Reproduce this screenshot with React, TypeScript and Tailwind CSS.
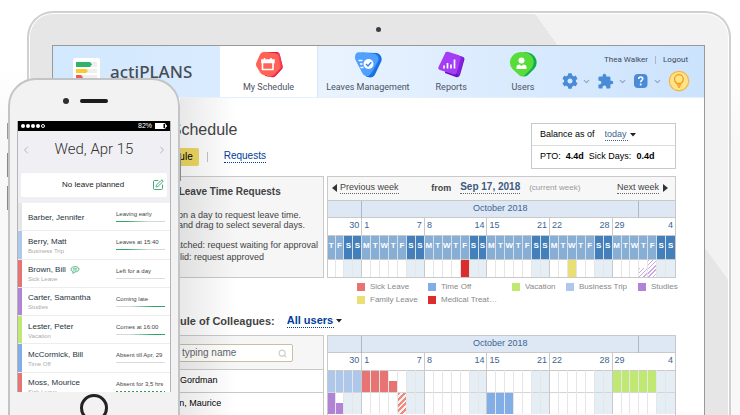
import React from "react";
import clsx from "clsx";
import { FaCog } from "react-icons/fa";
import { MdExtension } from "react-icons/md";
import { ChevronDown, ChevronLeft, ChevronRight, Search, SquarePen } from "lucide-react";

type Mark = { color: string; half?: boolean };

const colors = {
  sick: "bg-[#e87373]",
  timeOff: "bg-[#82aee8]",
  vacation: "bg-[#bfe973]",
  business: "bg-[#adc8ea]",
  studies: "bg-[#b083d6]",
  family: "bg-[#e9df74]",
  medical: "bg-[#dc2d2d]",
  none: "bg-[#e6e6e6]",
  studiesWait:
    "bg-[repeating-linear-gradient(135deg,#c9abe6_0px,#c9abe6_1px,#ffffff_1px,#ffffff_3px)]",
  sickWait:
    "bg-[repeating-linear-gradient(135deg,#ee8a80_0px,#ee8a80_2px,#fdf3ee_2px,#fdf3ee_4px)]",
};

// the calendar runs from Thu, Sep 27 to Sun, Nov 4
const DAYS = 39;
const OFFSET = 4;
const letters = ["T", "F", "S", "S", "M", "T", "W"];
const days = Array.from({ length: DAYS }, (_, i) => i);
const weeks = [
  [1, 7],
  [8, 14],
  [15, 21],
  [22, 28],
  [29, 4],
];

const isWeekend = (i: number) => i % 7 === 2 || i % 7 === 3;
const isWeekEnd = (i: number) => i % 7 === 3;

const oct = (day: number) => day + OFFSET - 1;

const myMarks: Record<number, Mark> = {
  [oct(12)]: { color: colors.medical },
  [oct(24)]: { color: colors.family },
  [oct(32)]: { color: colors.studiesWait, half: true },
  [oct(33)]: { color: colors.studiesWait },
};

const gordman: Record<number, Mark> = {
  0: { color: colors.business },
  1: { color: colors.business },
  2: { color: colors.business },
  3: { color: colors.business },
  [oct(1)]: { color: colors.sick },
  [oct(2)]: { color: colors.sick },
  [oct(3)]: { color: colors.sick },
  [oct(4)]: { color: colors.sick, half: true },
  [oct(29)]: { color: colors.vacation },
  [oct(30)]: { color: colors.vacation },
  [oct(31)]: { color: colors.vacation },
  [oct(32)]: { color: colors.vacation },
  [oct(33)]: { color: colors.vacation },
};

const maurice: Record<number, Mark> = {
  0: { color: colors.studies },
  1: { color: colors.studies, half: true },
  [oct(5)]: { color: colors.sickWait },
  [oct(15)]: { color: colors.timeOff },
  [oct(16)]: { color: colors.timeOff },
  [oct(17)]: { color: colors.timeOff },
};

const legend = [
  { label: "Sick Leave", color: colors.sick },
  { label: "Time Off", color: colors.timeOff },
  { label: "Vacation", color: colors.vacation },
  { label: "Business Trip", color: colors.business },
  { label: "Studies", color: colors.studies },
  { label: "Family Leave", color: colors.family },
  { label: "Medical Treat…", color: colors.medical },
];

const early = "bg-[linear-gradient(90deg,#2fa566_20%,#d2dbd6_65%)]";
const late = "bg-[linear-gradient(90deg,#d2dbd6_30%,#2fa566_75%)]";
const empty = "bg-[#dcdcdc]";
const dashes =
  "bg-[repeating-linear-gradient(90deg,#2f9a60_0px,#2f9a60_2px,#ffffff_2px,#ffffff_4px)]";

const people = [
  { name: "Barber, Jennifer", color: colors.none, status: "Leaving early", bar: early },
  { name: "Berry, Matt", type: "Business Trip", color: colors.business, status: "Leaves at 15:40", bar: early },
  { name: "Brown, Bill", type: "Sick Leave", color: colors.sick, status: "Left for a day", bar: empty, note: true },
  { name: "Carter, Samantha", type: "Studies", color: colors.studies, status: "Coming late", bar: late },
  { name: "Lester, Peter", type: "Vacation", color: colors.vacation, status: "Comes at 16:00", bar: late },
  { name: "McCormick, Bill", type: "Time Off", color: colors.timeOff, status: "Absent till Apr, 29", bar: empty },
  { name: "Moss, Mourice", type: "Sick Leave", color: colors.sick, status: "Absent for 3,5 hrs", bar: dashes },
];

const LogoIcon = () => (
  <svg viewBox="0 0 27 27" className="size-[27px]">
    <rect width="27" height="27" rx="2" fill="#fff" />
    <path d="M3 4h21v5H3zM3 11h21v4H3zM3 17h21v5H3z" fill="#efefef" />
    <path d="M3 4h14l2 2.3L17 9H3z" fill="#2fb36c" />
    <path d="M3 11h10l2 2-2 2H3z" fill="#fcca2c" />
    <path d="M3 17h5l2 2.500-2 2.500H3z" fill="#ee5a5a" />
  </svg>
);

const ScheduleIcon = () => (
  <svg viewBox="0 0 28 28" className="size-7">
    <path d="M9 1h13q2 0 2.700 2l3 12q.5 2-1 3.500l-6 6.500q-1.500 1.500-3.500 1.200L10 25z" fill="#e8163f" />
    <path d="M22 2q2.500 0 3 2.500l2 10q.4 2-1 3.200L18 26z" fill="#f53f55" />
    <path d="M7.500 1.200Q9 .5 11 1l9.500 1.200q2 .3 2.800 2.300l2 10q.4 2-1 3.500l-6 6.300q-1.500 1.500-3.500 1.200L8.500 24q-2-.4-3-2L1.500 15.500q-1-1.600-.3-3.500L5 3.500q.8-1.700 2.500-2.300z" fill="#ff6257" />
    <path d="M7.500 10v8.500h10.500V10z" fill="none" stroke="#fff" strokeWidth="1.600" />
    <path d="M7 9h12v2.500H7zM9.500 7v3M16 7v3" fill="#fff" stroke="#fff" strokeWidth="1.500" />
  </svg>
);

const LeavesIcon = () => (
  <svg viewBox="0 0 28 28" className="size-7">
    <path d="M7 1.500 23 2q2.500.5 3.800 3 1.500 3 .4 5.500L21 23.500q-1.500 3-5 3l-4-1z" fill="#1a6fe0" />
    <path d="M21 3q4 1 4.500 5L17 25z" fill="#2e86f2" />
    <path d="M5 1.300 19.500 2.500q3 .5 4 3t.2 4.500L16.500 23q-1.500 2.500-4.300 2.200-2.300-.4-3.700-2.700L1.300 8.500Q.4 6 1.500 3.500T5 1.300z" fill="#4fa0ff" />
    <path d="M4.500 9.500h4M6 13h2.500M6.500 16.500h3" stroke="#fff" strokeWidth="1.600" />
    <circle cx="14.500" cy="13" r="5" fill="#fff" />
    <path d="m12 13 2 2 3.300-3.800" fill="none" stroke="#2e86f2" strokeWidth="1.400" />
  </svg>
);

const ReportsIcon = () => (
  <svg viewBox="0 0 28 28" className="size-7">
    <path d="M9 1 26 6q1.800.8 1.400 2.600L23 24q-1 2.500-3.500 2.300L8 22z" fill="#6a0fc0" />
    <path d="m23 5 3 1.300q1 .6.800 2L22.500 23q-.6 2-2.500 2z" fill="#8422dc" />
    <path d="M8.500 1.500Q9.300.4 11 .8l11 3.400q2.200.8 1.700 3L20 21.500q-.8 2.500-3 2L3 19q-2.400-1-1.500-3z" fill="#a43df5" />
    <path d="M7 17.500v-3M10.500 17.500V12M14 17.500v-4M17.500 17.500V8.500" stroke="#fff" strokeWidth="1.700" />
  </svg>
);

const UsersIcon = () => (
  <svg viewBox="0 0 28 28" className="size-7">
    <path d="M15 1q9 0 12 7 2 6-2 10l-6 6q-2 2-5 1.500z" fill="#0fae4d" />
    <path d="M12.500 1Q21 .8 24 7.500q2 5.500-1.500 10l-7 7q-2.500 2-5 0L3.500 18Q-.3 13.500 1.500 8 4.500 1.200 12.500 1z" fill="#58dc3a" />
    <circle cx="12.500" cy="9.500" r="3" fill="#fff" />
    <path d="M7.500 18v-2q0-2.500 3-2.500l2 1.500 2-1.500q3 0 3 2.500v2z" fill="#fff" />
  </svg>
);

const HelpIcon = () => (
  <svg viewBox="0 0 16 16" className="size-4">
    <rect x="1" y="1" width="13.500" height="14" rx="4" fill="#4a8bd8" />
    <path d="M5.700 6q0-2 2-2t2 1.800q0 1-1 1.600-1 .5-1 1.800" fill="none" stroke="#fff" strokeWidth="1.600" />
    <circle cx="7.700" cy="11.600" r="1" fill="#fff" />
  </svg>
);

const BulbIcon = () => (
  <svg viewBox="0 0 22 22" className="size-[22px]">
    <circle cx="11" cy="11" r="9.700" fill="#ffe48a" stroke="#f6b545" strokeWidth="1.200" />
    <path d="M8.800 13.500Q6.500 11.500 6.500 9a4.400 4.400 0 0 1 8.800 0q0 2.500-2.300 4.500zM8.800 15.200h4.300M9.800 17h2.300" fill="none" stroke="#f59a1b" strokeWidth="1.300" />
  </svg>
);

const Note = () => (
  <svg viewBox="0 0 10 8" className="h-2 w-[10px]">
    <path d="M5 .6c2.300 0 4 1 4 2.600S7.300 5.900 5 5.900L2.800 7.400l.3-1.700C1.800 5.300 1 4.400 1 3.200 1 1.600 2.700.6 5 .6z" fill="#e4f5ec" stroke="#43ac75" strokeWidth=".8" />
    <path d="M3 2.600h4M3 4h4" stroke="#43ac75" strokeWidth=".6" />
  </svg>
);

const Caret = () => (
  <svg viewBox="0 0 6 4" className="h-1 w-1.5" aria-hidden="true">
    <path d="M0 0h6L3 3.500z" fill="#222" />
  </svg>
);

const navItems = [
  { label: "My Schedule", icon: <ScheduleIcon />, style: "bg-white px-[23px]" },
  { label: "Leaves Management", icon: <LeavesIcon />, style: "border-l border-[#d5e6f8] px-2" },
  { label: "Reports", icon: <ReportsIcon />, style: "px-[18px]" },
  { label: "Users", icon: <UsersIcon />, style: "pl-6 pr-2" },
];

const Header = () => {
  return (
    <header className="flex h-[52px] justify-between border-b border-[#e6f0fa] bg-[linear-gradient(90deg,#d2e8fe_0%,#d9ebfe_25%,#e9f3fe_42%,#dcecfe_65%,#cce3fd_100%)]">
      <div className="flex shrink-0">
        <a href="#home" className="flex w-[167px] shrink-0 items-center gap-[10px] pl-5">
          <LogoIcon />
          <span className="font-['Noto_Sans'] text-[17px] font-medium text-[#474c55]">actiPLANS</span>
        </a>
        <nav className="flex">
          {navItems.map((item) => (
            <a
              key={item.label}
              href="#nav"
              className={clsx("flex flex-col items-center pt-[5px] font-[Roboto] text-[9px] leading-4 text-[#4b5261]", item.style)}
            >
              {item.icon}
              <span className="whitespace-nowrap">{item.label}</span>
            </a>
          ))}
        </nav>
      </div>
      <div className="flex shrink-0 flex-col items-end pr-[14px] pt-2">
        <div className="flex h-3 items-center gap-[7px] pr-0.5 font-[Roboto] text-[8px] text-[#3f4a5c]">
          <span>Thea Walker</span>
          <span className="h-2 w-px bg-[#a9b6c4]" />
          <a href="#logout">Logout</a>
        </div>
        <div className="flex items-center gap-1.5 pt-1 text-[#4a8bd8]">
          <button aria-label="Settings" className="flex items-center gap-1">
            <FaCog size={16} />
            <ChevronDown size={9} color="#8fa5bd" strokeWidth={3} />
          </button>
          <button aria-label="Add-ons" className="flex items-center gap-1">
            <MdExtension size={17} />
            <ChevronDown size={9} color="#8fa5bd" strokeWidth={3} />
          </button>
          <button aria-label="Help" className="flex items-center gap-1">
            <HelpIcon />
            <ChevronDown size={9} color="#8fa5bd" strokeWidth={3} />
          </button>
          <button aria-label="Tips">
            <BulbIcon />
          </button>
        </div>
      </div>
    </header>
  );
};

// the first day is cut by the left edge of the calendar
const DayColumns = () => (
  <colgroup>
    {days.map((i) => (
      <col key={i} className={i === 0 ? "w-[7px]" : undefined} />
    ))}
  </colgroup>
);

const MonthRows = () => (
  <>
    <tr className="h-4 border-b border-[#c9c9c9] bg-[#dde8f4]">
      <th colSpan={4} className="border-r border-[#a9b9c9]" />
      <th colSpan={31} className="border-r border-[#a9b9c9] p-0 pb-0.5 font-normal">
        October 2018
      </th>
      <th colSpan={4} />
    </tr>
    <tr className="h-[18px] border-b border-[#c9c9c9]">
      <th colSpan={4} className="border-r border-[#c9c9c9] pb-0.5 pr-0.5 text-right font-normal">
        30
      </th>
      {weeks.map(([from, to]) => (
        <th key={from} colSpan={7} className="border-r border-[#c9c9c9] px-0.5 pb-0.5 font-normal last:border-r-0">
          <div className="flex justify-between">
            <span>{from}</span>
            <span>{to}</span>
          </div>
        </th>
      ))}
    </tr>
  </>
);

const DayCells = ({ marks }: { marks: Record<number, Mark> }) => (
  <>
    {days.map((i) => (
      <td
        key={i}
        className={clsx(
          "h-px border-r p-0 last:border-r-0",
          isWeekEnd(i) ? "border-[#c9c9c9]" : "border-[#e6e6e6]",
          isWeekend(i) && "bg-[#e6eef5]"
        )}
      >
        {marks[i] && (
          <div className="flex h-full flex-col justify-end">
            <div className={clsx(marks[i].color, marks[i].half ? "h-1/2" : "h-full")} />
          </div>
        )}
      </td>
    ))}
  </>
);

const table = "w-full table-fixed border-collapse text-[9px] leading-3 text-[#3c6492]";

const MySchedule = () => {
  return (
    <section className="flex-1 border border-[#c9c9c9]">
      <div className="flex h-6 items-center justify-between border-b border-[#c9c9c9] bg-[#f7f7f7] pb-0.5 pl-1 pr-[7px] text-[9px] leading-3 text-[#444]">
        <button className="flex items-center gap-[3px]">
          <svg viewBox="0 0 5 8" className="h-2 w-[5px]">
            <path d="M5 0v8L0 4z" fill="#333" />
          </svg>
          <span className="border-b border-dotted border-[#666]">Previous week</span>
        </button>
        <div className="flex items-center gap-[9px] pr-1">
          <span className="font-bold">from</span>
          <button className="border-b border-dotted border-[#666] text-[10px] font-bold text-[#3c5a80]">
            Sep 17, 2018
          </button>
          <span className="text-[8px] text-[#999]">(current week)</span>
        </div>
        <button className="flex items-center gap-1">
          <span className="border-b border-dotted border-[#666]">Next week</span>
          <svg viewBox="0 0 5 8" className="h-2 w-[5px]">
            <path d="M0 0v8l5-4z" fill="#333" />
          </svg>
        </button>
      </div>
      <table className={table}>
        <DayColumns />
        <thead>
          <MonthRows />
          <tr className="h-6 border-b border-[#c9c9c9]">
            {days.map((i) => (
              <th
                key={i}
                className={clsx(
                  "border-r border-[#d5e0ea] p-0 pb-[3px] text-[8px] text-white last:border-r-0",
                  isWeekend(i) ? "bg-[#437fba]" : "bg-[#87aed5]"
                )}
              >
                {letters[i % 7]}
              </th>
            ))}
          </tr>
        </thead>
        <tbody>
          <tr className="h-[18px]">
            <DayCells marks={myMarks} />
          </tr>
        </tbody>
      </table>
    </section>
  );
};

const Content = () => {
  return (
    <main className="pl-[92px] pr-7">
      <div className="flex h-[78px] justify-between">
        <div className="pt-5">
          <h1 className="text-base leading-6 text-[#444]">My Schedule</h1>
          <div className="flex h-6 items-end text-[10px]">
            <button className="rounded-xs bg-[#f0d962] px-1.5 py-[3px] leading-3 text-black">Schedule</button>
            <span className="ml-2 mb-1 h-[10px] w-px bg-[#c4c4c4]" />
            <a href="#requests" className="ml-4 mb-[3px] border-b border-dotted border-[#003d99] leading-3 text-[#003d99]">
              Requests
            </a>
          </div>
        </div>
        <div className="mt-[25px] h-[46px] w-[145px] border border-[#c9c9c9] bg-white text-[9px] text-black">
          <div className="flex h-[22px] items-center border-b border-[#dcdcdc] px-2">
            <label htmlFor="balance">Balance as of</label>
            <select
              id="balance"
              className="ml-[10px] mr-0.5 appearance-none border-b border-dotted border-[#3c6492] leading-[11px] text-[#3c6492]"
            >
              <option>today</option>
            </select>
            <Caret />
          </div>
          <div className="flex h-[22px] items-center px-2 whitespace-nowrap">
            PTO: <b className="mx-[5px]">4.4d</b> Sick Days: <b className="ml-[5px]">0.4d</b>
          </div>
        </div>
      </div>

      <div className="flex gap-[3px]">
        <section className="w-[179px] border border-[#c9c9c9] bg-[#f6f6f6] pl-[10px] pt-[9px] text-[9px] leading-[10px] whitespace-nowrap text-[#444]">
          <h2 className="pl-1.5 text-[10px] leading-3 font-bold">My Leave Time Requests</h2>
          <p className="pt-3">Click on a day to request leave time.</p>
          <p>Click and drag to select several days.</p>
          <p className="flex items-center gap-[5px] pt-[10px]">
            <span className={clsx("size-2", colors.sickWait)} />
            Hatched: request waiting for approval
          </p>
          <p className="flex items-center gap-[5px] pt-0.5">
            <span className={clsx("size-2", colors.sick)} />
            Solid: request approved
          </p>
        </section>
        <MySchedule />
      </div>

      <ul className="ml-[212px] grid grid-cols-[71px_84px_54px_72px_auto] pt-0.5 text-[8px] leading-[13px] text-[#888]">
        {legend.map((item) => (
          <li key={item.label} className="flex items-center gap-[5px] whitespace-nowrap">
            <span className={clsx("size-2", item.color)} />
            {item.label}
          </li>
        ))}
      </ul>

      <div className="flex items-center pb-1.5 pl-0.5 pt-[7px] text-[11px] leading-4 font-bold text-[#444]">
        <label htmlFor="users">Schedule of Colleagues:</label>
        <select
          id="users"
          className="ml-3 mr-0.5 appearance-none border-b border-dotted border-[#003d99] leading-[13px] text-[#003d99]"
        >
          <option>All users</option>
        </select>
        <Caret />
      </div>

      <div className="flex gap-[3px]">
        <div className="w-[179px] border border-[#c9c9c9] text-[9px] text-black">
          <div className="h-[34px] border-b border-[#c9c9c9] bg-[#f6f6f6] pl-1.5 pr-[30px] pt-2">
            <div className="flex h-[18px] items-center rounded-xs border border-[#cbbf9c] bg-white px-[5px]">
              <input
                aria-label="Find a user"
                placeholder="Start typing name"
                className="w-full min-w-0 text-[10px] leading-3 outline-none placeholder:text-[#666]"
              />
              <Search size={9} strokeWidth={3} className="shrink-0 text-[#cfcfcf]" />
            </div>
          </div>
          <div className="flex h-[23px] items-center border-b border-[#c9c9c9] pl-2">Adam Gordman</div>
          <div className="flex h-[22px] items-center pl-2">Watson, Maurice</div>
        </div>
        <div className="flex-1 border border-[#c9c9c9]">
          <table className={table}>
            <DayColumns />
            <thead>
              <MonthRows />
            </thead>
            <tbody>
              <tr className="h-[22px] border-b border-[#d5d5d5]">
                <DayCells marks={gordman} />
              </tr>
              <tr className="h-[22px]">
                <DayCells marks={maurice} />
              </tr>
            </tbody>
          </table>
        </div>
      </div>
    </main>
  );
};

const Phone = () => {
  return (
    <aside className="absolute left-2 top-[78px] h-[360px] w-[172px] rounded-t-[28px] border-2 border-[#c3c4c6] bg-[#f2f2f2] px-[7px]">
      <span className="absolute -left-[3px] top-[43px] h-4 w-px bg-[#999]" />
      <span className="absolute -left-[3px] top-[73px] h-6 w-px bg-[#888]" />
      <span className="absolute -left-[3px] top-[106px] h-6 w-px bg-[#888]" />
      <span className="absolute -right-[3px] top-[73px] h-7 w-px bg-[#888]" />
      <div className="flex h-[41px] items-center gap-[11px] pl-[46px]">
        <span className="size-1.5 rounded-full bg-[#2e2e2e]" />
        <span className="h-1 w-7 rounded-full bg-[#1c1c1c]" />
      </div>
      <div className="border-x border-[#b5b5b8] bg-[#f0eff4]">
        <div className="flex h-[10px] items-center bg-black px-[3px] text-[7px] text-white">
          <span className="flex gap-px">
            <i className="size-1 rounded-full bg-white" />
            <i className="size-1 rounded-full bg-white" />
            <i className="size-1 rounded-full bg-white" />
            <i className="size-1 rounded-full bg-white" />
            <i className="size-1 rounded-full border border-white" />
          </span>
          <span className="ml-auto mr-[3px]">82%</span>
          <svg viewBox="0 0 12 6" className="h-1.5 w-3">
            <rect x=".5" y=".5" width="10" height="5" rx="1" fill="none" stroke="#fff" />
            <path d="M0 0h8.500v6H0zM11.200 2h.8v2h-.8z" fill="#fff" />
          </svg>
        </div>
        <div className="flex h-[42px] items-center justify-between px-0.5 pb-[5px] text-[#b5b5ba]">
          <button aria-label="Previous day">
            <ChevronLeft size={12} strokeWidth={2} />
          </button>
          <h2 className="font-[Roboto] text-[15px] font-light text-[#333]">Wed, Apr 15</h2>
          <button aria-label="Next day">
            <ChevronRight size={12} strokeWidth={2} />
          </button>
        </div>
        <div className="mx-[3px] flex h-6 items-center rounded-xs bg-white pl-[41px] pr-[3px] text-[8px] text-[#222]">
          No leave planned
          <button aria-label="Plan a leave" className="ml-auto text-[#43ac75]">
            <SquarePen size={12} strokeWidth={2} />
          </button>
        </div>
        <div className="mt-1.5 h-[189px] overflow-hidden bg-white">
          <ul className="grid h-[198px] grid-rows-7">
            {people.map((p) => (
              <li key={p.name} className="flex border-b border-[#ededf0]">
                <span className={clsx("w-1 shrink-0", p.color)} />
                <div className="flex flex-1 flex-col justify-center pl-1.5 pt-0.5">
                  <div className="flex items-center gap-1 text-[8px] leading-[10px] text-[#27333d]">
                    {p.name}
                    {p.note && <Note />}
                  </div>
                  {p.type && <div className="text-[6px] leading-2 text-[#aaa]">{p.type}</div>}
                </div>
                <div className="w-[54px] shrink-0 pr-[5px] pt-[7px] text-[6px] leading-2 whitespace-nowrap text-[#444]">
                  {p.status}
                  <div className={clsx("mt-[3px] h-px", p.bar)} />
                </div>
              </li>
            ))}
          </ul>
        </div>
      </div>
      <button
        aria-label="Home"
        className="mx-auto mt-0.5 block size-7 rounded-full border-[3px] border-[#222]"
      />
    </aside>
  );
};

const App = () => {
  return (
    <div className="relative h-screen overflow-hidden bg-[linear-gradient(180deg,#ffffff_15%,#f8f8f8_35%)] font-['Liberation_Sans',sans-serif]">
      <div className="ml-[27px] mr-[9px] mt-[11px] rounded-t-[26px] border-2 border-b-0 border-[#d0d0d0] bg-[linear-gradient(54deg,#e6e6e6_81%,#f2f2f2_81%)] pl-[23px] pr-6 ring-1 ring-white ring-inset">
        <div className="flex h-8 items-center justify-center">
          <span className="size-[5px] rounded-full bg-[#3a3f45]" />
        </div>
        <div className="h-screen border-x border-t border-[#999] bg-white">
          <Header />
          <Content />
        </div>
      </div>
      <div className="pointer-events-none absolute bottom-0 left-[180px] top-[98px] w-14 bg-[linear-gradient(90deg,rgba(0,0,0,0.09),rgba(0,0,0,0))]" />
      <Phone />
    </div>
  );
};

export default App;
